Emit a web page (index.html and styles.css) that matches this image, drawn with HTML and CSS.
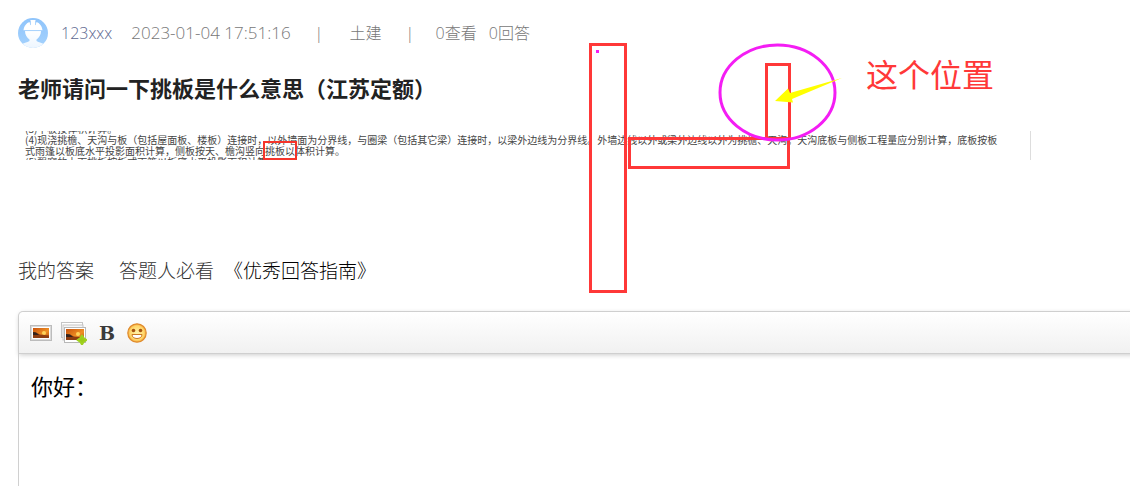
FILE: index.html
```html
<!DOCTYPE html>
<html lang="zh-CN">
<head>
<meta charset="utf-8">
<title>老师请问一下挑板是什么意思（江苏定额）</title>
<link rel="stylesheet" href="styles.css">
</head>
<body>
<main class="page">
  <header class="meta">
    <svg class="avatar" viewBox="0 0 30 30" aria-hidden="true">
      <defs>
        <linearGradient id="sky" x1="0" y1="0" x2="0" y2="1"><stop offset="0" stop-color="#8fc4fb"/><stop offset="1" stop-color="#a5d2fd"/></linearGradient>
        <linearGradient id="body" x1="0" y1="0" x2="0" y2="1"><stop offset="0" stop-color="#fff"/><stop offset="1" stop-color="#edf6ff"/></linearGradient>
        <clipPath id="disc"><circle cx="15" cy="15" r="15"/></clipPath>
      </defs>
      <g clip-path="url(#disc)">
        <rect width="30" height="30" fill="url(#sky)"/>
        <path d="M7 13h16c0 4-2 6.500-4.500 8.500V23c2 1.500 6.500 2 9 4v3h-25v-3c2.500-2 7-2.500 9-4v-1.500C9 19.500 7 17 7 13z" fill="url(#body)"/>
        <path d="M5.500 12.300C6 8 8.500 5 11.500 4L12.500 7.500V2h5v5.500L18.500 4C21.500 5 24 8 24.500 12.300z" fill="#fff"/>
        <path d="M12.500 3v4M17.500 3v4" stroke="#a8d2fb" stroke-width=".8"/>
        <path d="M6 12.600h18" stroke="#a8d2fb" stroke-width=".8"/>
      </g>
    </svg>
    <a class="user" href="#user">123xxx</a>
    <time class="date" datetime="2023-01-04T17:51:16">2023-01-04 17:51:16</time>
    <span class="bar">|</span>
    <span class="topic">土建</span>
    <span class="bar">|</span>
    <span class="counts"><span>0查看</span><span>0回答</span></span>
  </header>

  <h1 class="title">老师请问一下挑板是什么意思（江苏定额）</h1>

  <div class="excerpt">
    <div class="excerpt-text">
      <p>(3)平板按体积计算。</p>
      <p>(4)现浇挑檐、天沟与板（包括屋面板、楼板）连接时，以外墙面为分界线，与圈梁（包括其它梁）连接时，以梁外边线为分界线。外墙边线以外或梁外边线以外为挑檐、天沟。天沟底板与侧板工程量应分别计算，底板按板</p>
      <p>式雨篷以板底水平投影面积计算，侧板按天、檐沟竖向<mark>挑板以</mark>体积计算。</p>
      <p>(5)飘窗的上下挑板按板式雨篷以板底水平投影面积计算。</p>
    </div>
  </div>

  <div class="answer-head">
    <span>我的答案</span>
    <span class="hint">答题人必看<a href="#guide">《优秀回答指南》</a></span>
  </div>

  <section class="editor">
    <div class="toolbar">
      <button type="button" aria-label="图片">
        <svg width="22" height="18" viewBox="0 0 22 18">
          <defs><linearGradient id="dusk" x1="0" y1="0" x2="1" y2="1"><stop offset="0" stop-color="#c9510c"/><stop offset=".6" stop-color="#ef9125"/><stop offset="1" stop-color="#bd500b"/></linearGradient></defs>
          <rect x=".5" y="1.500" width="21" height="15" fill="#fff" stroke="#bcbcbc"/>
          <rect x="1.500" y="2.500" width="19" height="13" fill="none" stroke="#dadada"/>
          <rect x="3" y="4" width="16" height="10" fill="url(#dusk)"/>
          <circle cx="14" cy="9" r="2" fill="#ffd35a"/>
          <path d="M3 8l3 .5 4 2 9 1V14H3z" fill="#8d3d12"/><path d="M3 8l3 .5 3 2.500H3z" fill="#35221b"/>
        </svg>
      </button>
      <button type="button" aria-label="多图上传">
        <svg width="26" height="24" viewBox="0 0 26 24">
          <rect x=".5" y="1.500" width="21" height="15" fill="#fff" stroke="#c5c5c5"/>
          <rect x="2" y="4" width="20" height="15" fill="#f7f7f7" stroke="#c5c5c5"/>
          <rect x="3.500" y="6.500" width="21" height="15" fill="#fff" stroke="#b8b8b8"/>
          <rect x="5" y="8" width="18" height="11" fill="url(#dusk)"/>
          <circle cx="17" cy="13" r="2" fill="#ffd35a"/>
          <path d="M5 13l4 .5 4 2 10 1V19H5z" fill="#8d3d12"/><path d="M5 13l4 .5 3 2.500H5z" fill="#35221b"/>
          <path d="M21 14.500l1.500 2.500 3 2-3 2-1.500 2.500-1.500-2.500-3-2 3-2z" fill="#9acb18" stroke="#9fd01f" stroke-width="2" stroke-linejoin="round"/>
        </svg>
      </button>
      <button type="button" class="bold" aria-label="加粗">B</button>
      <button type="button" aria-label="表情">
        <svg width="20" height="20" viewBox="0 0 20 20">
          <defs><radialGradient id="face"><stop offset="0" stop-color="#fff3a8"/><stop offset=".75" stop-color="#ffd76b"/><stop offset="1" stop-color="#f6a83b"/></radialGradient></defs>
          <circle cx="10" cy="10" r="9.200" fill="url(#face)" stroke="#df8b2d" stroke-width="1.200"/>
          <circle cx="6.500" cy="7.500" r="1.800" fill="#a6530f"/><circle cx="13.500" cy="7.500" r="1.800" fill="#a6530f"/>
          <path d="M5 11.500h10c0 2.500-2 4-5 4s-5-1.500-5-4z" fill="#fff" stroke="#cc7920"/>
        </svg>
      </button>
    </div>
    <textarea class="input" aria-label="我的答案">你好：</textarea>
  </section>

  <svg class="markup" width="460" height="260" viewBox="580 40 460 260">
    <g fill="none" stroke="#ff3838" stroke-width="3">
      <rect x="590.500" y="44.500" width="35" height="247"/>
      <rect x="629.500" y="138.500" width="159" height="29"/>
      <path d="M766.500 138V64.500h23V138"/>
    </g>
    <rect x="596" y="50" width="3" height="3" fill="#f41df4"/>
    <ellipse cx="777.500" cy="92.500" rx="57.500" ry="47.500" fill="none" stroke="#f41df4" stroke-width="3"/>
    <path d="M775 101l13-12.500 2 4.500 52-15-50 21 1 3.500z" fill="#ff0"/>
    <text class="note" x="866" y="87">这个位置</text>
  </svg>
</main>
</body>
</html>
```
FILE: styles.css
```css
* { box-sizing: border-box; }
body {
  margin: 0;
  background: #fff;
  color: #111;
  font-family: "Open Sans", "Noto Sans CJK SC", sans-serif;
}
h1, p { margin: 0; }
a { color: inherit; text-decoration: none; }

.page {
  position: relative;
  display: flex;
  flex-direction: column;
  min-height: 100vh;
  padding: 18px 0 0 18px;
  overflow: hidden;
}

.meta {
  display: flex;
  align-items: center;
  height: 30px;
  color: #777;
  font-size: 16px;
  font-weight: 300;
  line-height: 30px;
  white-space: nowrap;
}
.avatar { width: 30px; height: 30px; margin-right: 13px; }
.user { margin-right: 19px; color: #5d6890; }
.date { margin-right: 24px; font-size: 17px; }
.bar { width: 6px; text-align: center; }
.topic { margin: 0 24px 0 29px; }
.counts { display: flex; gap: 12px; margin-left: 24px; }

.title {
  margin-top: 23px;
  color: #222;
  font-family: "Noto Sans CJK SC", sans-serif;
  font-size: 22px;
  line-height: 32px;
}

.excerpt {
  width: 92%;
  max-width: 1013px;
  height: 29px;
  margin-top: 28px;
  overflow: hidden;
  border-right: 1px solid #ddd;
}
.excerpt-text {
  margin-top: -8px;
  padding-left: 7px;
  color: #444;
  font-family: "Noto Sans CJK SC", sans-serif;
  font-size: 10px;
  line-height: 11px;
  white-space: nowrap;
}
.excerpt mark {
  background: none;
  color: inherit;
  outline: 2px solid #f5352b;
}

.answer-head {
  display: flex;
  gap: 25px;
  margin-top: 96px;
  color: #333;
  font-family: "Noto Sans CJK SC", sans-serif;
  font-size: 19px;
  font-weight: 300;
  line-height: 28px;
}
.hint { display: flex; gap: 10px; }
.hint a { color: #000; }

.editor {
  display: flex;
  flex: 1;
  flex-direction: column;
  margin: 27px -8px 0 0;
  border: 1px solid #d0d0d0;
  border-bottom: 0;
  border-radius: 5px 5px 0 0;
}
.toolbar {
  display: flex;
  align-items: center;
  gap: 9px;
  height: 42px;
  padding-left: 11px;
  border-bottom: 1px solid #cfcfcf;
  border-radius: 5px 5px 0 0;
  background: linear-gradient(#fff, #f1f1f1);
  box-shadow: 0 1px 5px #ccc;
}
.toolbar button {
  display: flex;
  align-items: center;
  justify-content: center;
  padding: 0;
  border: 0;
  background: none;
}
.toolbar .bold {
  width: 22px;
  color: #3b3b3b;
  font: bold 19px "DejaVu Serif", serif;
}
.input {
  display: block;
  flex: 1;
  width: 100%;
  min-height: 120px;
  padding: 15px 12px;
  border: 0;
  outline: 0;
  resize: none;
  background: none;
  color: #000;
  font: 22px/32px "Noto Sans CJK SC", sans-serif;
}

.markup {
  position: absolute;
  top: 40px;
  left: 580px;
  pointer-events: none;
}
.note {
  fill: #ff3838;
  font-family: "Noto Sans CJK SC", sans-serif;
  font-size: 32px;
}
```
